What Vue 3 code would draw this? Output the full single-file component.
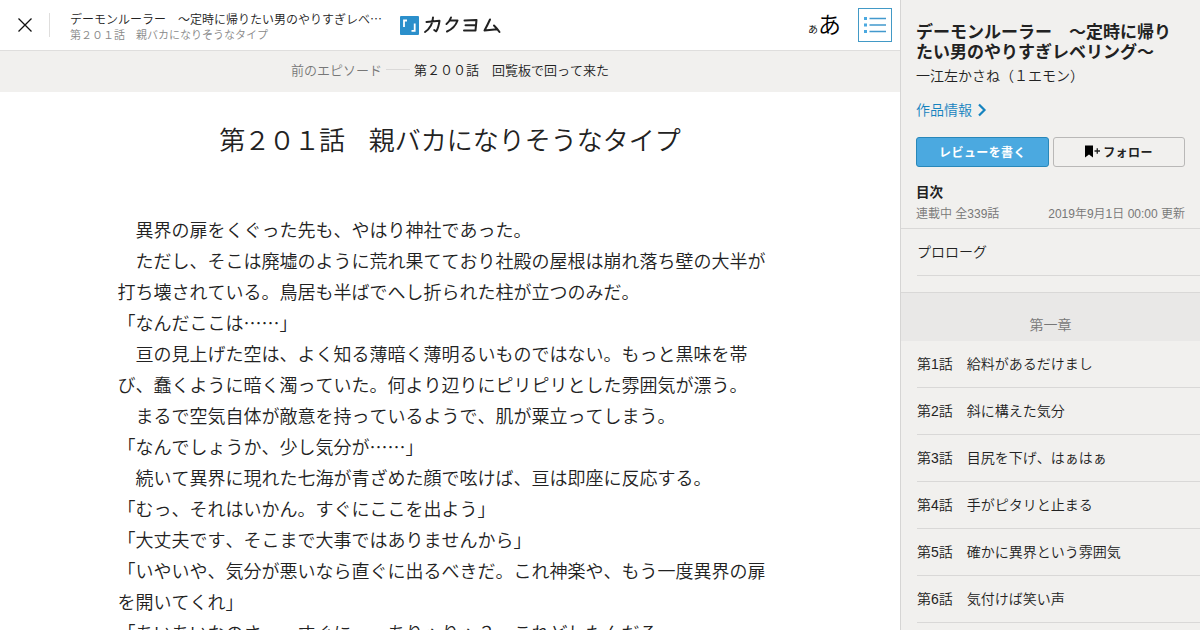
<template>
  <div class="viewer">
    <main class="reader">
      <header class="topbar">
        <button class="close" aria-label="閉じる">
          <svg width="16" height="16" viewBox="0 0 16 16">
            <path d="M1.5 1.5l13 13M14.5 1.5l-13 13" fill="none" stroke="#111" stroke-width="1.3" />
          </svg>
        </button>
        <div class="heading">
          <p class="work">デーモンルーラー　～定時に帰りたい男のやりすぎレベ⋯</p>
          <p class="episode">第２０１話　親バカになりそうなタイプ</p>
        </div>
        <div class="logo">
          <svg class="logo-mark" width="19" height="19" viewBox="0 0 19 19">
            <rect width="19" height="19" rx="1" fill="#2b8fcb" />
            <path d="M4 11V4.500h3M14.700 7.500v7.300h-3.200" fill="none" stroke="#fff" stroke-width="1.8" />
          </svg>
          <svg class="logo-name" width="78" height="20" viewBox="0 0 78 20">
            <g fill="none" stroke="#222" stroke-width="2" stroke-linecap="round" stroke-linejoin="round">
              <path d="M3.500 7l13-1.200q-1 7-3.300 10.500l-2-1.300M10 2.500q-.5 9.500-8 14.500" />
              <path d="M28 2.500q-1.500 4-4.500 6.500M27 5.500h7.500q-2.500 7.500-10.500 11" />
              <path d="M41.500 5.500l12-.6-1 10.600M42.500 10.200h10M41 15.500h11.500" />
              <path d="M67 4.500q-2.500 5.500-5.500 11l12.500-1.300M71 10.500q3 3 5.500 6.500" />
            </g>
          </svg>
        </div>
        <div class="tools">
          <span class="font-size"><small>あ</small><big>あ</big></span>
          <button class="toc-button" aria-label="目次">
            <svg width="24" height="18" viewBox="0 0 24 18">
              <path d="M1 2.500h3M1 9h3M1 15.500h3" stroke="#4ba9e0" stroke-width="3" />
              <path d="M6.500 2.500H23M6.500 9H23M6.500 15.500H23" stroke="#4299cd" stroke-width="1.500" />
            </svg>
          </button>
        </div>
      </header>

      <nav class="previous">
        <span class="previous-label">前のエピソード</span>
        <span class="previous-line"></span>
        <span>第２００話　回覧板で回って来た</span>
      </nav>

      <article>
        <h1><span class="number">第２０１話　</span>親バカになりそうなタイプ</h1>
        <div class="text">
          <p v-for="(line, i) in lines" :key="i">{{ line }}</p>
        </div>
      </article>
    </main>

    <aside class="sidebar">
      <div class="info">
        <h2>デーモンルーラー　～定時に帰り<br>たい男のやりすぎレベリング～</h2>
        <p class="author">一江左かさね（１エモン）</p>
        <a class="detail">作品情報
          <svg width="10" height="14" viewBox="0 0 10 14">
            <path d="M2 1.500l5.500 5.500L2 12.500" fill="none" stroke="#1583bf" stroke-width="2.200" />
          </svg>
        </a>
        <div class="buttons">
          <button class="review">レビューを書く</button>
          <button class="follow">
            <svg width="15" height="13" viewBox="0 0 15 13">
              <path d="M0 .5h8v12L4 9.500l-4 3z" fill="#000" />
              <path d="M9.500 6h5.500M12.250 3.250v5.500" stroke="#222" stroke-width="1.300" />
            </svg>
            フォロー
          </button>
        </div>
        <h3>目次</h3>
        <div class="status">
          <span>連載中 全339話</span>
          <span>2019年9月1日 00:00 更新</span>
        </div>
      </div>
      <ol class="prologue">
        <li>プロローグ</li>
      </ol>
      <h4>第一章</h4>
      <ol>
        <li v-for="(title, i) in episodes" :key="title">第{{ i + 1 }}話　{{ title }}</li>
      </ol>
    </aside>
  </div>
</template>

<script setup>
const lines = [
  '　異界の扉をくぐった先も、やはり神社であった。',
  '　ただし、そこは廃墟のように荒れ果てており社殿の屋根は崩れ落ち壁の大半が',
  '打ち壊されている。鳥居も半ばでへし折られた柱が立つのみだ。',
  '「なんだここは⋯⋯」',
  '　亘の見上げた空は、よく知る薄暗く薄明るいものではない。もっと黒味を帯',
  'び、蠢くように暗く濁っていた。何より辺りにピリピリとした雰囲気が漂う。',
  '　まるで空気自体が敵意を持っているようで、肌が粟立ってしまう。',
  '「なんでしょうか、少し気分が⋯⋯」',
  '　続いて異界に現れた七海が青ざめた顔で呟けば、亘は即座に反応する。',
  '「むっ、それはいかん。すぐにここを出よう」',
  '「大丈夫です、そこまで大事ではありませんから」',
  '「いやいや、気分が悪いなら直ぐに出るべきだ。これ神楽や、もう一度異界の扉',
  'を開いてくれ」',
  '「あいあいなのさ、、すぐに、、ありゃりゃ？　これどしたんだろ',
]

const episodes = [
  '給料があるだけまし',
  '斜に構えた気分',
  '目尻を下げ、はぁはぁ',
  '手がピタリと止まる',
  '確かに異界という雰囲気',
  '気付けば笑い声',
]
</script>

<style>
body {
  margin: 0;
  overflow: hidden;
}
</style>

<style scoped>
.viewer {
  display: flex;
  width: 1200px;
  height: 630px;
  overflow: hidden;
  background: #fff;
  color: #222;
  font-family: "Liberation Sans", "Noto Sans CJK JP", sans-serif;
  font-weight: 350;
  font-kerning: none;
  text-spacing-trim: space-all;
}
p,
h1,
h2,
h3,
h4,
ol {
  margin: 0;
  padding: 0;
  font-weight: 350;
  list-style: none;
  white-space: nowrap;
}
button {
  padding: 0;
  font-family: inherit;
  background: none;
  border: none;
}
.reader {
  width: 900px;
  height: 630px;
  overflow: hidden;
}
.topbar {
  display: flex;
  align-items: center;
  height: 50px;
  border-bottom: 1px solid #dfdedd;
}
.close {
  display: flex;
  justify-content: center;
  align-items: center;
  width: 49px;
  height: 24px;
  border-right: 1px solid #dfdedd;
  box-sizing: content-box;
}
.heading {
  width: 330px;
  margin-left: 20px;
  padding-top: 5px;
}
.work {
  font-size: 12px;
  line-height: 15px;
}
.episode {
  color: #888;
  font-size: 11px;
  line-height: 15px;
}
.logo {
  display: flex;
  align-items: center;
  gap: 4px;
}
.logo svg {
  display: block;
}
.tools {
  display: flex;
  align-items: center;
  gap: 17px;
  margin-left: auto;
  margin-right: 8px;
}
.font-size {
  padding-top: 4px;
  color: #000;
  line-height: 34px;
}
.font-size small {
  font-size: 10px;
}
.font-size big {
  font-size: 23px;
}
.toc-button {
  display: flex;
  justify-content: center;
  align-items: center;
  width: 34px;
  height: 34px;
  border: 1px solid #4299c6;
}
.previous {
  display: flex;
  justify-content: center;
  align-items: center;
  box-sizing: border-box;
  height: 41px;
  padding-bottom: 4px;
  background: #f1f0ee;
  font-size: 13px;
}
.previous-label {
  color: #777;
}
.previous-line {
  width: 24px;
  height: 1px;
  margin: 0 4px;
  background: #dad9d8;
}
h1 {
  margin-top: 28px;
  font-size: 26px;
  line-height: 42px;
  text-align: center;
}
.number {
  letter-spacing: -1.1px;
}
.text {
  margin: 54px 0 0 117.5px;
  font-size: 18px;
  line-height: 31px;
}
.sidebar {
  box-sizing: border-box;
  width: 300px;
  height: 630px;
  overflow: hidden;
  border-left: 1px solid #d6d5d4;
  background: #f1f0ee;
}
.info {
  padding: 23px 15px 5px;
  border-bottom: 1px solid #d9d8d7;
}
h2 {
  font-size: 17px;
  font-weight: bold;
  line-height: 20px;
}
.author {
  margin-top: 3px;
  font-size: 14px;
  line-height: 20px;
}
.detail {
  display: flex;
  align-items: center;
  gap: 5px;
  margin-top: 14px;
  color: #1583bf;
  font-size: 14px;
  line-height: 20px;
}
.buttons {
  display: flex;
  gap: 4px;
  margin-top: 17px;
}
.buttons button {
  display: flex;
  justify-content: center;
  align-items: center;
  gap: 3px;
  box-sizing: border-box;
  width: 133px;
  height: 30px;
  padding-bottom: 1px;
  border: 1px solid #b9b8b7;
  border-radius: 3px;
  color: #222;
  font-size: 12px;
  font-weight: bold;
  letter-spacing: 0.4px;
}
.buttons .review {
  border-color: #2887b9;
  background: #4ba9e0;
  color: #fff;
}
.buttons .follow {
  width: 132px;
}
h3 {
  margin-top: 16px;
  font-size: 13.5px;
  font-weight: bold;
  line-height: 20px;
}
.status {
  display: flex;
  justify-content: space-between;
  margin-top: 2px;
  color: #777;
  font-size: 12px;
  line-height: 18px;
}
li {
  height: 46px;
  margin-left: 16px;
  border-bottom: 1px solid #d9d8d7;
  font-size: 14px;
  line-height: 46px;
}
.prologue {
  padding-bottom: 16px;
}
h4 {
  height: 48px;
  border-top: 1px solid #d9d8d7;
  background: #e9e8e7;
  color: #777;
  font-size: 14px;
  line-height: 64px;
  text-align: center;
}
</style>
